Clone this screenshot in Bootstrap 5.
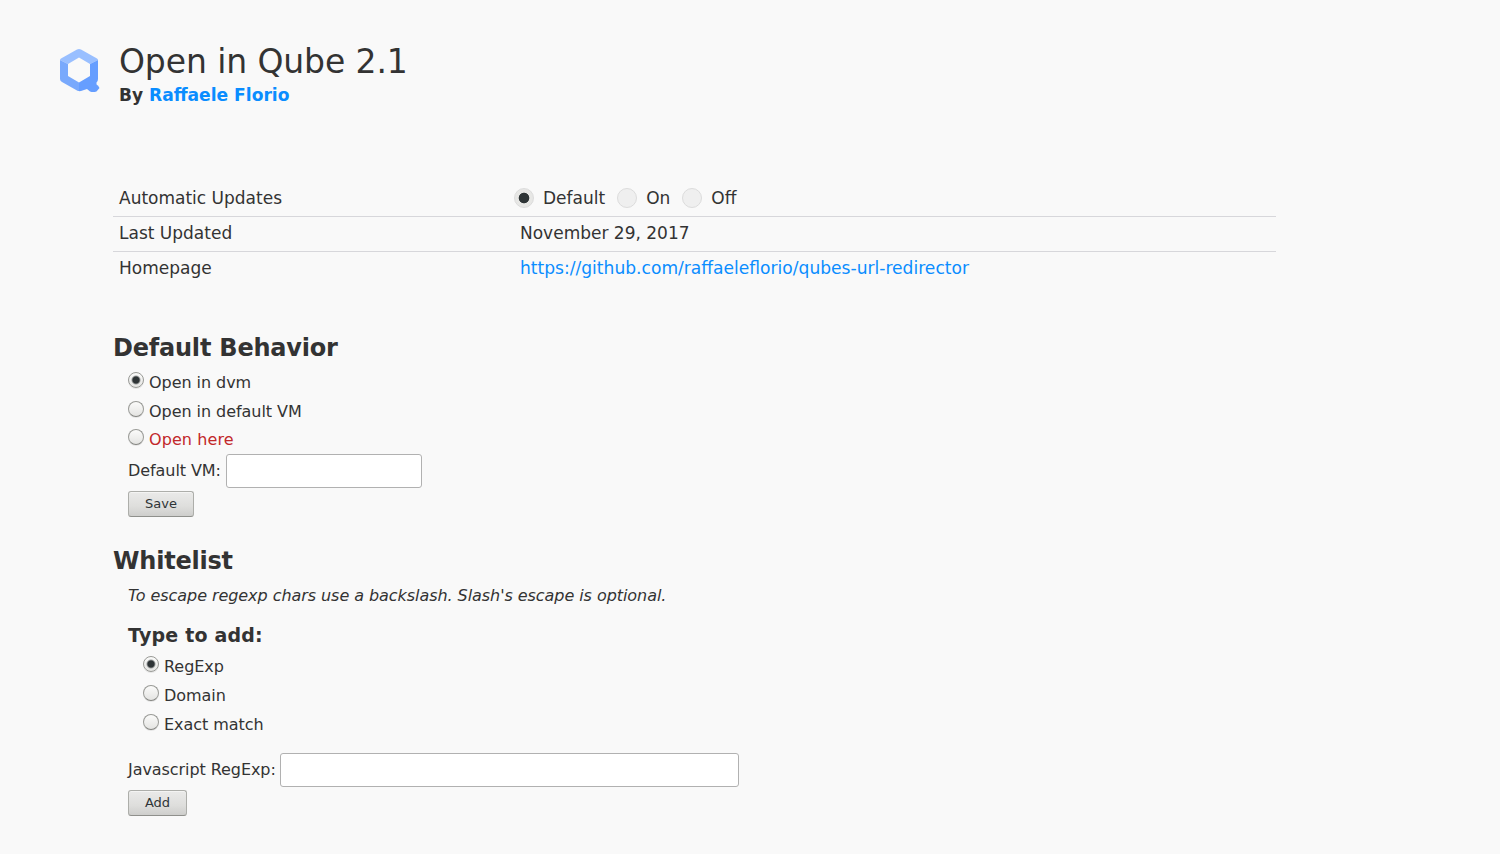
<!DOCTYPE html>
<html lang="en">
<head>
<meta charset="utf-8">
<title>Open in Qube</title>
<link href="https://cdn.jsdelivr.net/npm/bootstrap@5.3.0/dist/css/bootstrap.min.css" rel="stylesheet">
<style>
body{background:#f9f9f9;color:#333;font-family:"DejaVu Sans",sans-serif;font-size:16px;height:854px;overflow:hidden}
a{color:#0a8dff}
h1,h2,h3{margin:0;color:#333}
.page-head{padding:42px 0 0 60px}
.logo{width:40px;height:44px;margin:6px 19px 0 0}
h1{font-size:33px;line-height:40px;font-weight:400;letter-spacing:-.1px}
.author{font-size:17px;line-height:20px;margin-top:3px}
.author a{font-size:17.12px}
.content{margin-left:113px}
.details{width:1163px;margin-top:77px;font-size:17px;line-height:32px}
.details>div{height:35px;border-bottom:1px solid #d7d7db;padding-left:6px}
.details>div:last-child{border:0}
.details dt{width:401px;font-weight:400}
.details dd{margin:0}
.details dd a{font-size:17.1px}
.updates{margin-left:-6px!important;height:32px}
.updates label{margin-right:12px}
.updates .form-check-input{width:20px;height:20px;border:1px solid #dcdcdc;background-color:#efefef;margin:0 9px 0 0;box-shadow:none}
.updates .form-check-input:checked{background:radial-gradient(circle at center,#2e3436 4.9px,#e7e7e5 5.7px);border-color:#dcdcdc}
h2{font-size:24px;line-height:28px;font-weight:700;letter-spacing:-.21px}
h3{font-size:19px;line-height:24px;font-weight:700;letter-spacing:.19px}
.indent{margin-left:15px}
.choice{height:28.7px;line-height:29px;letter-spacing:-.05px}
.choice .form-check-input{width:16px;height:16px;margin:4px 5px 0 0;border:1px solid #999a96;border-bottom-color:#82837f;background:linear-gradient(#fbfbfa,#e4e4e2);box-shadow:0 1px 0 #e6e6e6}
.choice .form-check-input:checked{background:radial-gradient(circle at center,#2e3436 3.1px,rgba(46,52,54,.25) 4.4px,transparent 5px),linear-gradient(#fbfbfa,#e4e4e2);border-color:#999a96}
.choice.warn{color:#c2282a;letter-spacing:.09px}
.field-label{letter-spacing:-.07px}
.text-box{height:34px;border:1px solid #b1b1b1;border-radius:3px;padding:0 6px;margin-left:4.5px;background:#fff}
#vm{margin-left:5.2px}
.btn-gtk{display:block;height:26px;margin-top:3px;padding:0 0 1px;font-size:13px;line-height:22px;color:#2e3436;border:1px solid #adaeaa;border-bottom-color:#8f908c;border-radius:3px;background:linear-gradient(#eaeae9,#dededc 60%,#cececc);box-shadow:inset 0 1px 0 #f4f4f3}
</style>
</head>
<body>
<header class="page-head d-flex align-items-start">
  <svg class="logo" viewBox="0 0 40 44">
    <path fill="#99bfff" d="M17 1.500q2-1 4 0l16 9q1 .5 1 1.500L30 16 19 9.500 8 16 0 12q0-1 1-1.500z"/>
    <path fill="#79a9fc" d="M0 12L8 16v12l11 6.500v8.500q-1 0-2-.5L2 34q-2-1-2-3z"/>
    <path fill="#669eff" d="M38 12V31q0 2-1.500 3.500v1.500q0 1 1.500 1.500l1.500 2.500-3 3.500q-3.500 1-6.500 0l-3-2.500-6 2-2 .2V34.500l11-6.500V16z"/>
  </svg>
  <div>
    <h1>Open in Qube 2.1</h1>
    <div class="author fw-bold">By <a href="#" class="text-decoration-none">Raffaele Florio</a></div>
  </div>
</header>
<main class="content">
  <dl class="details mb-0">
    <div class="d-flex"><dt>Automatic Updates</dt>
      <dd class="updates d-flex">
        <label class="d-flex align-items-center"><input class="form-check-input" type="radio" name="updates" checked>Default</label>
        <label class="d-flex align-items-center"><input class="form-check-input" type="radio" name="updates">On</label>
        <label class="d-flex align-items-center"><input class="form-check-input" type="radio" name="updates">Off</label>
      </dd></div>
    <div class="d-flex"><dt>Last Updated</dt><dd>November 29, 2017</dd></div>
    <div class="d-flex"><dt>Homepage</dt><dd><a href="#" class="text-decoration-none">https://github.com/raffaeleflorio/qubes-url-redirector</a></dd></div>
  </dl>
  <section style="margin-top:47px">
    <h2>Default Behavior</h2>
    <div class="indent" style="padding-top:6px">
      <label class="choice d-flex"><input class="form-check-input" type="radio" name="behavior" checked>Open in dvm</label>
      <label class="choice d-flex"><input class="form-check-input" type="radio" name="behavior">Open in default VM</label>
      <label class="choice warn d-flex"><input class="form-check-input" type="radio" name="behavior">Open here</label>
      <div class="d-flex align-items-center"><label class="field-label" for="vm">Default VM:</label><input id="vm" class="text-box" style="width:196px"></div>
      <button class="btn btn-gtk" style="width:66px">Save</button>
    </div>
  </section>
  <section style="margin-top:30px">
    <h2>Whitelist</h2>
    <div class="indent">
      <p class="fst-italic mb-0" style="line-height:24px;padding-top:9px;letter-spacing:-.06px">To escape regexp chars use a backslash. Slash's escape is optional.</p>
      <h3 style="margin-top:15px">Type to add:</h3>
      <div class="indent" style="padding-top:5.3px">
        <label class="choice d-flex"><input class="form-check-input" type="radio" name="kind" checked>RegExp</label>
        <label class="choice d-flex"><input class="form-check-input" type="radio" name="kind">Domain</label>
        <label class="choice d-flex"><input class="form-check-input" type="radio" name="kind">Exact match</label>
      </div>
      <div class="d-flex align-items-center" style="margin-top:14.7px"><label class="field-label" for="regexp">Javascript RegExp:</label><input id="regexp" class="text-box" style="width:459px"></div>
      <button class="btn btn-gtk" style="width:59px">Add</button>
    </div>
  </section>
</main>
<script src="https://cdn.jsdelivr.net/npm/bootstrap@5.3.0/dist/js/bootstrap.bundle.min.js"></script>
</body>
</html>
